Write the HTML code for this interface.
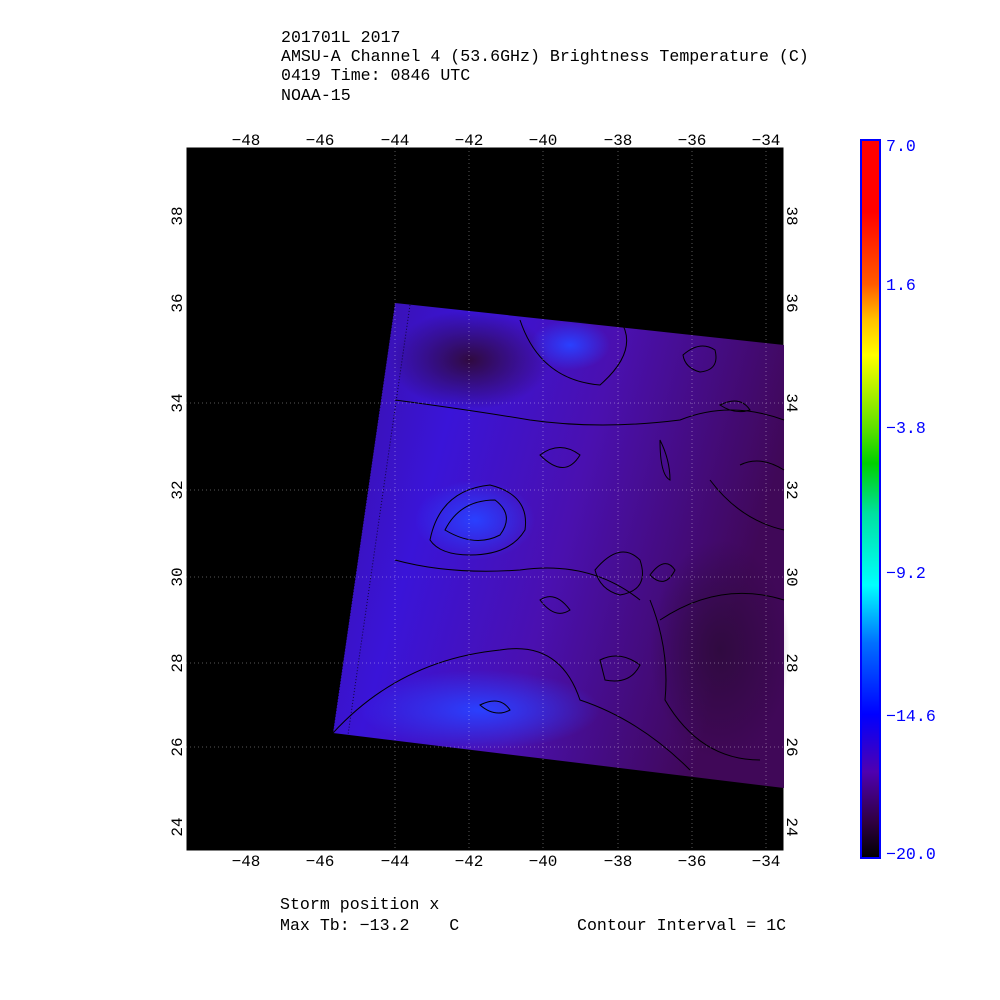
<!DOCTYPE html>
<html><head><style>
html,body{margin:0;padding:0;background:#fff;width:1000px;height:1000px;overflow:hidden}
</style></head><body>
<svg width="1000" height="1000" xmlns="http://www.w3.org/2000/svg" style="font-family:'Liberation Mono','DejaVu Sans Mono',monospace">
<defs>
<linearGradient id="cb" x1="0" y1="0" x2="0" y2="1">
<stop offset="0" stop-color="#ff0000"/>
<stop offset="0.1" stop-color="#ff0000"/>
<stop offset="0.2" stop-color="#ff5a00"/>
<stop offset="0.25" stop-color="#ffc000"/>
<stop offset="0.3" stop-color="#ffff00"/>
<stop offset="0.4" stop-color="#60e000"/>
<stop offset="0.45" stop-color="#00d000"/>
<stop offset="0.52" stop-color="#00e0a0"/>
<stop offset="0.62" stop-color="#00ffff"/>
<stop offset="0.7" stop-color="#0070ff"/>
<stop offset="0.8" stop-color="#0000ff"/>
<stop offset="0.88" stop-color="#5000b0"/>
<stop offset="0.95" stop-color="#300040"/>
<stop offset="1" stop-color="#000000"/>
</linearGradient>
<linearGradient id="dg" x1="0" y1="0" x2="1" y2="0.3">
<stop offset="0" stop-color="#3a10a0"/>
<stop offset="0.3" stop-color="#3a14d8"/>
<stop offset="0.6" stop-color="#4a10b0"/>
<stop offset="1" stop-color="#400858"/>
</linearGradient>
<radialGradient id="tl" cx="0.5" cy="0.5" r="0.5"><stop offset="0" stop-color="#300a40"/><stop offset="1" stop-color="#300a40" stop-opacity="0"/></radialGradient>
<radialGradient id="bl" cx="0.5" cy="0.5" r="0.5"><stop offset="0" stop-color="#2a40ff"/><stop offset="1" stop-color="#2a40ff" stop-opacity="0"/></radialGradient>
</defs>
<g font-size="16.6" fill="#000">
<text x="281" y="42">201701L 2017</text>
<text x="281" y="61">AMSU-A Channel 4 (53.6GHz) Brightness Temperature (C)</text>
<text x="281" y="80">0419 Time: 0846 UTC</text>
<text x="281" y="100">NOAA-15</text>
<text x="280" y="909">Storm position x</text>
<text x="280" y="930">Max Tb: −13.2&#160;&#160;&#160;&#160;C</text>
<text x="577" y="930">Contour Interval = 1C</text>
</g>
<rect x="186" y="147" width="598" height="704" fill="#000"/>
<rect x="186" y="147" width="598" height="704" fill="none" stroke="#fff" stroke-width="1"/>
<polygon points="395,303 784,345 784,788 333,733" fill="url(#dg)"/>
<ellipse cx="470" cy="360" rx="80" ry="50" fill="url(#tl)"/>
<ellipse cx="720" cy="650" rx="70" ry="110" fill="url(#tl)"/>
<ellipse cx="475" cy="520" rx="60" ry="40" fill="url(#bl)"/>
<ellipse cx="480" cy="710" rx="120" ry="40" fill="url(#bl)"/>
<ellipse cx="570" cy="345" rx="40" ry="25" fill="url(#bl)"/>
<g fill="none" stroke="#000" stroke-width="1">
<path d="M430,540 Q440,490 490,485 Q530,495 525,530 Q510,555 470,555 Q440,555 430,540Z"/>
<path d="M445,530 Q460,500 495,500 Q515,515 500,535 Q475,548 445,530Z"/>
<path d="M520,320 Q540,380 600,385 Q640,350 620,320"/>
<path d="M395,400 Q470,410 530,420 Q600,430 680,420 Q730,400 784,420"/>
<path d="M683,355 Q700,340 715,350 Q720,370 700,372 Q685,368 683,355Z"/>
<path d="M720,405 Q740,395 750,410 Q735,415 720,405Z"/>
<path d="M540,455 Q560,440 580,455 Q565,480 540,455Z"/>
<path d="M595,570 Q620,540 640,560 Q650,590 620,595 Q600,590 595,570Z"/>
<path d="M650,575 Q665,555 675,570 Q665,590 650,575Z"/>
<path d="M540,600 Q555,590 570,610 Q555,620 540,600Z"/>
<path d="M600,660 Q620,650 640,665 Q630,685 605,680Z"/>
<path d="M480,705 Q500,695 510,710 Q495,718 480,705Z"/>
<path d="M650,600 Q670,650 665,700 Q700,760 760,760 M660,620 Q720,580 784,600"/>
<path d="M740,465 Q760,455 784,470 M710,480 Q740,520 784,530"/>
<path d="M333,733 Q400,660 500,650 Q560,640 580,700 Q640,720 690,770"/>
<path d="M395,560 Q450,575 520,570 Q590,560 640,600"/>
<path d="M660,440 Q670,460 670,480 Q660,475 660,440Z"/>
</g>
<g stroke="#000" stroke-width="1" stroke-dasharray="1,2" opacity="0.7">
<path d="M395,303 L333,733 M410,305 L348,735 M380,330 L340,640"/>
</g>
<g stroke="#fff" stroke-width="1" stroke-dasharray="1,3" opacity="0.35" fill="none">
<line x1="469" y1="147" x2="469" y2="851"/><line x1="543" y1="147" x2="543" y2="851"/>
<line x1="618" y1="147" x2="618" y2="851"/><line x1="692" y1="147" x2="692" y2="851"/>
<line x1="766" y1="147" x2="766" y2="851"/><line x1="395" y1="147" x2="395" y2="851"/>
<line x1="186" y1="403" x2="784" y2="403"/><line x1="186" y1="490" x2="784" y2="490"/>
<line x1="186" y1="577" x2="784" y2="577"/><line x1="186" y1="663" x2="784" y2="663"/>
<line x1="186" y1="747" x2="784" y2="747"/>
</g>
<g font-size="16" fill="#000" text-anchor="middle">
<text x="246" y="145">−48</text><text x="320" y="145">−46</text><text x="395" y="145">−44</text><text x="469" y="145">−42</text><text x="543" y="145">−40</text><text x="618" y="145">−38</text><text x="692" y="145">−36</text><text x="766" y="145">−34</text>
<text x="246" y="866">−48</text><text x="320" y="866">−46</text><text x="395" y="866">−44</text><text x="469" y="866">−42</text><text x="543" y="866">−40</text><text x="618" y="866">−38</text><text x="692" y="866">−36</text><text x="766" y="866">−34</text>
</g>
<g font-size="16" fill="#000" text-anchor="middle">
<text transform="translate(182,216) rotate(-90)">38</text>
<text transform="translate(182,303) rotate(-90)">36</text>
<text transform="translate(182,403) rotate(-90)">34</text>
<text transform="translate(182,490) rotate(-90)">32</text>
<text transform="translate(182,577) rotate(-90)">30</text>
<text transform="translate(182,663) rotate(-90)">28</text>
<text transform="translate(182,747) rotate(-90)">26</text>
<text transform="translate(182,827) rotate(-90)">24</text>
<text transform="translate(787,216) rotate(90)">38</text>
<text transform="translate(787,303) rotate(90)">36</text>
<text transform="translate(787,403) rotate(90)">34</text>
<text transform="translate(787,490) rotate(90)">32</text>
<text transform="translate(787,577) rotate(90)">30</text>
<text transform="translate(787,663) rotate(90)">28</text>
<text transform="translate(787,747) rotate(90)">26</text>
<text transform="translate(787,827) rotate(90)">24</text>
</g>
<rect x="861" y="140" width="19" height="718" fill="url(#cb)" stroke="#00f" stroke-width="2"/>
<g font-size="16.6" fill="#00f">
<text x="886" y="151">7.0</text>
<text x="886" y="290">1.6</text>
<text x="886" y="433">−3.8</text>
<text x="886" y="578">−9.2</text>
<text x="886" y="721">−14.6</text>
<text x="886" y="859">−20.0</text>
</g>
</svg>
</body></html>
